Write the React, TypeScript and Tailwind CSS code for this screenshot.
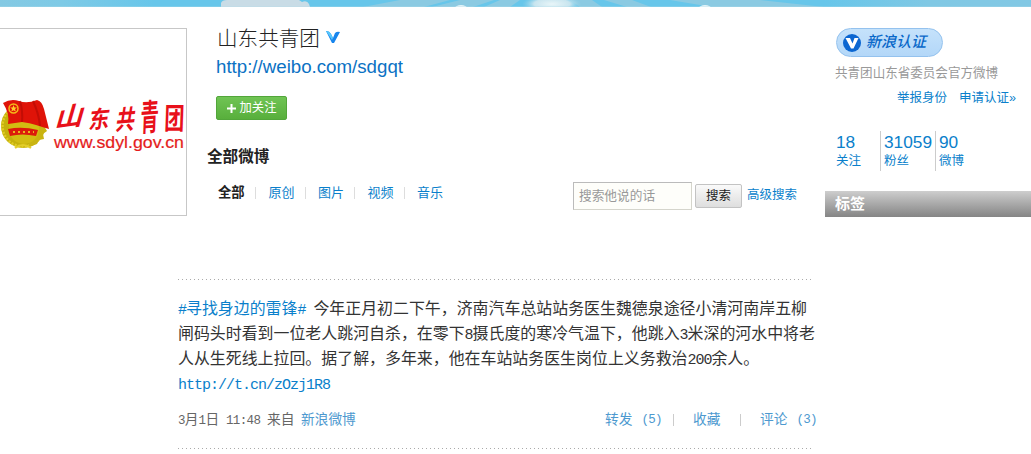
import React from "react";

const SANS = "font-['Liberation_Sans','Noto_Sans_CJK_SC',sans-serif]";
const CJK = "font-['Noto_Sans_CJK_SC',sans-serif]";

function Banner() {
  return (
    <svg className="block h-[7px] w-full shrink-0" viewBox="0 0 1031 7" preserveAspectRatio="none">
      <defs>
        <linearGradient id="sky" x1="0" x2="1" y1="0" y2="0">
          <stop offset="0" stopColor="#84c9e3" />
          <stop offset="0.06" stopColor="#7ecae6" />
          <stop offset="0.15" stopColor="#67c6ea" />
          <stop offset="0.8" stopColor="#67c6ea" />
          <stop offset="0.9" stopColor="#80c8e4" />
          <stop offset="1" stopColor="#82c8e4" />
        </linearGradient>
        <radialGradient id="glow">
          <stop offset="0" stopColor="#e8f5f8" />
          <stop offset="0.6" stopColor="#c8e5ef" />
          <stop offset="1" stopColor="#8fd0e8" stopOpacity="0" />
        </radialGradient>
      </defs>
      <rect width="1031" height="7" fill="url(#sky)" />
      <path d="M363 7 400 0H450L424 7ZM432 7 460 0H494L473 7ZM484 7 500 0H520L510 7ZM570 0H592L602 7H580ZM604 0H632L651 7H627ZM670 0H760L824 7H712Z" fill="#8bcae2" />
      <path d="M221 7V3Q222 0 227 0H299L302 2Q307 0 309 4L310 7Z" fill="#c9dce6" />
      <ellipse cx="552" cy="4" rx="30" ry="9" fill="url(#glow)" />
      <ellipse cx="461" cy="8" rx="6" ry="3" fill="#e5f4f8" />
      <ellipse cx="705" cy="8" rx="6" ry="3" fill="#e5f4f8" />
      <rect y="6.4" width="1031" height=".6" fill="#b4dfee" opacity=".5" />
    </svg>
  );
}

function Logo() {
  return (
    <svg className="block h-[187px] w-[186px]" viewBox="0 29 186 187">
      <circle cx="23" cy="126" r="22" fill="#c5b10c" />
      <circle cx="23" cy="126" r="20.500" fill="none" stroke="#e0cd25" strokeWidth="2.500" strokeDasharray="2 1.500" />
      <path d="m29 147 8-3 2-4 5-1-1-5 4-3-3-5 2-5-9-4-8 8Z" fill="#c9b411" />
      <circle cx="24" cy="129" r="15" fill="#d2bd12" />
      <path d="M3 103Q11 98 19 101T37 100Q42 101 44 109L49 129Q42 127 36 125T22 122L8 124Q10 114 3 103Z" fill="#df1308" />
      <path d="M20 101Q23 111 22 122M33 101Q39 114 40 126" stroke="#b40b05" strokeWidth="2" fill="none" opacity=".65" />
      <circle cx="13.500" cy="108.500" r="4.500" fill="none" stroke="#f5ba19" strokeWidth="1.500" />
      <path d="m13.500 105 1 2.400 2.500.1-2 1.600.8 2.500-2.300-1.400-2.200 1.400.8-2.500-2-1.600 2.500-.1Z" fill="#ffd02b" />
      <path d="M8 129Q22 126 38 130L36 136Q22 133 10 136Z" fill="#dc1b0b" />
      <path d="M13 132H34" stroke="#e7b71b" strokeWidth="2" strokeDasharray="2 3" />
      <path d="M15 148Q23 142 31 148" stroke="#e3ce28" strokeWidth="2" fill="none" />
      <g className={CJK} fill="#e8101a" fontWeight="700" fontSize="28">
        <text transform="translate(54 128) rotate(-8) skewX(-24) scale(1.02 .9)">山</text>
        <text transform="translate(88 129) rotate(-6) skewX(-14) scale(.74 .84)">东</text>
        <text transform="translate(115 130) rotate(-5) skewX(-14) scale(.68 .94)">共</text>
        <text transform="translate(140 131) rotate(-4) skewX(-6) scale(.66 1.280)">青</text>
        <text transform="translate(164 129) skewX(-2) scale(.72 1.060)">团</text>
      </g>
      <text x="54" y="148" textLength="130" lengthAdjust="spacingAndGlyphs" fill="#e51c1c" stroke="#e51c1c" strokeWidth=".2" fontSize="17" className={SANS}>www.sdyl.gov.cn</text>
    </svg>
  );
}

function Filters() {
  const items = ["原创", "图片", "视频", "音乐"];
  return (
    <nav className="ml-[31px] flex h-5 w-[290px] items-center pt-px text-[13px] leading-5 text-[#0a7fcb]">
      <b className="w-[37px] text-[13.300px] text-[#222]">全部</b>
      {items.map((t) => (
        <React.Fragment key={t}>
          <i className="h-3 w-px bg-[#ddd]" />
          <a className="ml-[12.500px] w-[36px] shrink-0">{t}</a>
        </React.Fragment>
      ))}
    </nav>
  );
}

function Profile() {
  return (
    <section className="flex h-[272px]">
      <div className="mt-[21px] h-[188px] w-[187px] shrink-0 border border-l-0 border-[#c7c7c7]">
        <Logo />
      </div>
      <div className="min-w-0 flex-1">
        <div className="mt-[18px] ml-[30px] flex h-7 items-center">
          <h1 className="w-[109px] text-[20.600px] leading-7 font-light text-[#222]">山东共青团</h1>
          <svg className="-mt-1 h-3 w-[14px]" viewBox="0 0 14 12">
            <path d="M0 0Q3-.5 5 3L7 7 9 2Q11 0 14 1L8 12H6Z" fill="#1785ed" />
            <path d="M0 0Q3-.5 5 3L7 7 6 9Z" fill="#58c7fb" />
          </svg>
        </div>
        <a className="mt-[2px] ml-[29px] block h-[25px] text-[18.700px] leading-6 text-[#0b72c4]">http://weibo.com/sdgqt</a>
        <button className="mt-[16px] ml-[29px] flex h-6 w-[71px] items-center justify-center gap-1 rounded-[2px] border border-[#52a63a] bg-linear-to-b from-[#70c454] to-[#58af3c] text-[12.300px] leading-5 text-white">
          <svg className="size-[9px]" viewBox="0 0 9 9"><path d="M4.500 0V9M0 4.500H9" stroke="#fff" strokeWidth="2" /></svg>
          加关注
        </button>
        <h2 className="mt-[25px] ml-[20px] h-6 text-[15.600px] leading-6 font-bold text-[#222]">全部微博</h2>
        <div className="mt-[13px] flex h-[29px]">
          <Filters />
          <div className="ml-[65px] flex h-[29px] shrink-0">
            <div className="h-[28px] w-[119px] border border-[#d5d5cc] border-t-[#bbb] border-l-[#bbb] bg-[#fefefa] pl-[5px] text-[12.700px] leading-[27px] text-[#999]">搜索他说的话</div>
            <button className="mt-[2px] ml-[3px] h-[24px] w-[47px] rounded-[2px] border border-[#c3c3c3] bg-linear-to-b from-[#fafafa] to-[#dedede] text-[12.500px] leading-[21px] text-[#222]">搜索</button>
            <a className="ml-[5px] pt-px text-[12.500px] leading-[25px] text-[#0a7fcb]">高级搜索</a>
          </div>
        </div>
      </div>
    </section>
  );
}

function DottedRule() {
  return <div className="h-px w-[636px] bg-[repeating-linear-gradient(90deg,#aaa_0_1.300px,transparent_1.300px_4px)]" />;
}

function Digits({ children }: { children: string }) {
  return <span className="font-['Liberation_Mono',monospace] text-[15px] tracking-[-1.030px]">{children}</span>;
}

function SmallDigits({ children }: { children: string }) {
  return <span className="font-['Liberation_Mono',monospace] text-[12.500px] tracking-[-0.650px] whitespace-pre">{children}</span>;
}

function Feed() {
  return (
    <article className="ml-[178px] w-[640px]">
      <DottedRule />
      <div className="mt-[16px] text-[15.930px] leading-[25px] whitespace-nowrap text-[#333]">
        <p className="h-[25px]"><a className="text-[#0a7fcb]"><Digits>#</Digits>寻找身边的雷锋<Digits>#</Digits></a><Digits> </Digits>今年正月初二下午，济南汽车总站站务医生魏德泉途径小清河南岸五柳</p>
        <p className="h-[25px]">闸码头时看到一位老人跳河自杀，在零下<Digits>8</Digits>摄氏度的寒冷气温下，他跳入<Digits>3</Digits>米深的河水中将老</p>
        <p className="h-[27px]">人从生死线上拉回。据了解，多年来，他在车站站务医生岗位上义务救治<Digits>200</Digits>余人。</p>
        <p className="h-[25px] font-['Liberation_Mono',monospace] text-[15px] tracking-[-1px] text-[#0a7fcb]">http://t.cn/zOzj1R8</p>
      </div>
      <footer className="mt-[12px] flex h-5 w-[636px] items-center text-[13.700px] leading-5 whitespace-nowrap text-[#4d99cf]">
        <span className="w-[123px] text-[#666]"><SmallDigits>3</SmallDigits>月<SmallDigits>1</SmallDigits>日<SmallDigits> 11:48 </SmallDigits>来自</span>
        <a>新浪微博</a>
        <a className="ml-auto flex w-[68px] gap-[9px]">转发<SmallDigits>(5)</SmallDigits></a>
        <i className="h-3 w-px bg-[#ccc]" />
        <a className="ml-[19px] w-[47px]">收藏</a>
        <i className="h-3 w-px bg-[#ccc]" />
        <a className="ml-[19px] flex w-[54px] gap-[9px]">评论<SmallDigits>(3)</SmallDigits></a>
      </footer>
      <div className="mt-[18px]"><DottedRule /></div>
    </article>
  );
}

function Stat({ n, label }: { n: string; label: string }) {
  return (
    <div className="flex flex-col">
      <span className="h-[21px] text-[17.300px] leading-[22px]">{n}</span>
      <span className="text-[12.500px] leading-[18px]">{label}</span>
    </div>
  );
}

function Sidebar() {
  return (
    <aside className="w-[206px] shrink-0 whitespace-nowrap text-[#0a7fcb]">
      <div className="mt-[21px] ml-[11px] flex h-[29px] w-[107px] items-center rounded-full border border-[#94c2ee] bg-linear-to-b from-[#c5e2fb] to-[#b3d7f8] pl-[6px]">
        <svg className="size-[18px]" viewBox="0 0 18 18">
          <circle cx="9" cy="9" r="9" fill="#0b66d1" />
          <path d="M2.500 4H7L9.500 9.500 11.500 4H15.500L10.500 14.500H8Z" fill="#fff" />
        </svg>
        <span className="ml-[5px] pb-px text-[15px] leading-6 font-medium text-[#0968c9] italic">新浪认证</span>
      </div>
      <p className="mt-[6px] ml-[10px] h-5 text-[12.550px] leading-5 text-[#999]">共青团山东省委员会官方微博</p>
      <p className="mt-[5px] ml-[72px] flex h-5 text-[12.500px] leading-5"><a className="w-[62px]">举报身份</a><a>申请认证»</a></p>
      <div className="mt-[23px] ml-[11px] flex h-10">
        <div className="w-[44px]"><Stat n="18" label="关注" /></div>
        <div className="w-[55px] border-l border-[#ccc] pl-[3px]"><Stat n="31059" label="粉丝" /></div>
        <div className="border-l border-[#ccc] pl-[3px]"><Stat n="90" label="微博" /></div>
      </div>
      <h3 className="mt-[20px] h-[26px] bg-linear-to-b from-[#cecece] to-[#858585] pl-[10px] text-[15px] leading-[25px] font-bold text-white">标签</h3>
    </aside>
  );
}

export default function App() {
  return (
    <main className={`flex h-[454px] w-[1031px] flex-col overflow-hidden bg-white ${SANS}`}>
      <Banner />
      <div className="flex min-h-0 flex-1">
        <div className="w-[825px] shrink-0">
          <Profile />
          <Feed />
        </div>
        <Sidebar />
      </div>
    </main>
  );
}
